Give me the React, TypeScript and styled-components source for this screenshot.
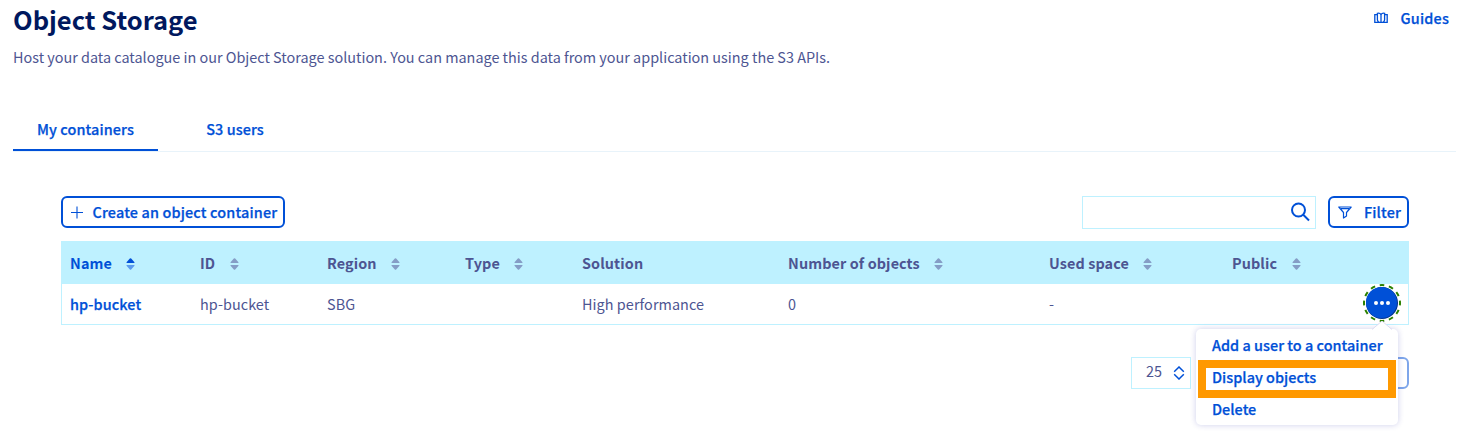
import React from 'react';
import styled, { createGlobalStyle } from 'styled-components';

const blue = '#0050d7';
const slate = '#4d5592';
const ice = '#bef1ff';

const GlobalStyle = createGlobalStyle`
  * { box-sizing: border-box; }
  body {
    margin: 0;
    background: #fff;
    color: ${slate};
    font-family: "Noto Sans CJK JP", "Noto Sans", sans-serif;
    font-size: 14.41px;
    line-height: 20px;
    overflow: hidden;
  }
  button { font: inherit; color: inherit; margin: 0; background: #fff; }
`;

const Page = styled.div`
  height: 444px;
  padding: 0 14px 0 13px;
  display: flex;
  flex-direction: column;
`;

const Header = styled.header`
  display: flex;
  justify-content: space-between;
  align-items: flex-start;
  height: 42px;
`;

const Title = styled.h1`
  margin: 2px 0 0;
  color: #00185e;
  font-size: 25.5px;
  line-height: 34px;
  font-weight: 700;
`;

const Label = styled.span<{ $spacing?: number }>`
  font-weight: 500;
  white-space: nowrap;
  letter-spacing: ${(p) => p.$spacing ?? 0.1}px;
  -webkit-text-stroke: 0.25px currentColor;
`;

const HeadLabel = styled.span`
  font-weight: 700;
  white-space: nowrap;
  letter-spacing: 0.1px;
`;

const GuidesLink = styled.a`
  display: flex;
  align-items: center;
  gap: 12px;
  margin: 8px 7px 0 0;
  color: ${blue};
`;

const Intro = styled.p`
  margin: 5px 0 0;
  height: 62px;
  white-space: nowrap;
`;

const Tabs = styled.nav`
  display: flex;
  gap: 24px;
  height: 43px;
  border-bottom: 1px solid #e8f3fa;
`;

const Tab = styled.a<{ $active?: boolean }>`
  display: flex;
  justify-content: center;
  width: ${(p) => (p.$active ? '145px' : '106px')};
  padding-top: 10px;
  color: ${blue};
  border-bottom: 2px solid ${(p) => (p.$active ? blue : 'transparent')};
`;

const Panel = styled.main`
  padding: 44px 47px 0 48px;
`;

const Toolbar = styled.div`
  display: flex;
  height: 33px;
  margin-bottom: 12px;
`;

const OutlineButton = styled.button<{ $width: number; $gap: number }>`
  display: flex;
  align-items: center;
  gap: ${(p) => p.$gap}px;
  width: ${(p) => p.$width}px;
  height: 32px;
  padding: 0 0 0 8px;
  border: 2px solid ${blue};
  border-radius: 6px;
  color: ${blue};
`;

const SearchBox = styled.div`
  display: flex;
  align-items: center;
  justify-content: flex-end;
  width: 234px;
  height: 33px;
  margin: 0 12px 0 auto;
  padding: 0 5px 1px 0;
  border: 1px solid ${ice};
`;

const Table = styled.div`
  border: 1px solid ${ice};
  height: 84px;
`;

const Row = styled.div<{ $head?: boolean }>`
  display: grid;
  grid-template-columns: 130px 127px 138px 117px 206px 261px 183px 1fr;
  align-items: center;
  height: ${(p) => (p.$head ? 42 : 40)}px;
  padding-left: 8px;
  background: ${(p) => (p.$head ? ice : '#fff')};
`;

const HeadCell = styled.div<{ $active?: boolean }>`
  display: flex;
  align-items: flex-start;
  gap: 14.5px;
  color: ${(p) => (p.$active ? blue : slate)};

  svg { margin-top: 5px; }
`;

const Cell = styled.div<{ $link?: boolean }>`
  padding-bottom: 2px;
  color: ${(p) => (p.$link ? blue : slate)};
  white-space: nowrap;
  letter-spacing: 0.06px;
`;

const ActionCell = styled.div`
  display: flex;
  justify-content: flex-end;
  padding: 0 7px 3px 0;
`;

const ActionAnchor = styled.div`
  position: relative;
  width: 38px;
  height: 38px;
`;

const Menu = styled.div`
  position: absolute;
  z-index: 2;
  top: 45px;
  right: 3px;
  width: 202px;
  height: 96px;
  border-radius: 5px;
  background: #fff;
  box-shadow: 0 0 6px rgba(0, 14, 156, 0.2);
`;

const MenuArrow = styled.svg`
  position: absolute;
  top: -8px;
  right: 5px;
`;

const MenuItem = styled.a`
  display: block;
  height: 32px;
  padding: 6px 0 0 16px;
  color: ${blue};
`;

const Highlight = styled.div`
  position: absolute;
  top: 31px;
  left: 2px;
  width: 198px;
  height: 38px;
  border: 8px solid #ff9900;
`;

const Pagination = styled.div`
  display: flex;
  justify-content: flex-end;
  margin-top: 32px;
`;

const PageSize = styled.div`
  display: flex;
  align-items: center;
  gap: 11px;
  width: 60px;
  height: 32px;
  padding-left: 14px;
  border: 1px solid ${ice};
`;

const PageSizeValue = styled.span`
  padding-bottom: 4px;
`;

const NextButton = styled.button`
  width: 40px;
  height: 32px;
  margin-left: 178px;
  border: 2px solid ${blue};
  border-radius: 6px;
  opacity: 0.5;
`;

const SortIcon = ({ active }: { active?: boolean }) => (
  <svg width="9" height="12" viewBox="0 0 9 12" fill={active ? blue : '#859dc6'}>
    <path d="M.5 4.2 3.8.6Q4.5 0 5.2.6L8.5 4.2Q8.7 5 8 5H1Q.3 5 .5 4.2Z" />
    <path
      d="M.5 7.8 3.8 11.4Q4.5 12 5.2 11.4L8.5 7.8Q8.7 7 8 7H1Q.3 7 .5 7.8Z"
      fill={active ? '#5c9bee' : '#859dc6'}
    />
  </svg>
);

const BookIcon = () => (
  <svg width="14" height="12" viewBox="0 0 14 12" fill="none" stroke={blue} strokeWidth="1.3">
    <path d="M3 2.600H.8v7.800h12.400V2.600H11" />
    <path d="M7 2.600C6.300 1.300 5 1 3.400 1.300v6.500c.2 1.200.8 2 1.600 2.600M7 2.600c.7-1.300 2-1.600 3.600-1.300v6.500c-.2 1.200-.8 2-1.600 2.600M7 2.600v7.800" />
  </svg>
);

const PlusIcon = () => (
  <svg width="12" height="13" viewBox="0 0 12 13" stroke={blue} strokeWidth="1.1">
    <path d="M6 .5v12M0 6.500h12" />
  </svg>
);

const SearchIcon = () => (
  <svg width="20" height="20" viewBox="0 0 20 20" fill="none" stroke={blue} strokeWidth="2">
    <circle cx="8.500" cy="8" r="6.500" />
    <path d="m13 12.500 6 6" />
  </svg>
);

const FilterIcon = () => (
  <svg width="14" height="13" viewBox="0 0 14 13" fill="none" stroke={blue} strokeWidth="1.200">
    <path
      d="M.8 1h12.400L8.500 6.500V10L5.500 12V6.500ZM3 2.600h8"
      strokeLinejoin="round"
    />
  </svg>
);

const StepperIcon = () => (
  <svg width="12" height="14" viewBox="0 0 12 14" fill="none" stroke={blue} strokeWidth="1.500">
    <path d="m1.200 5.700 4.800-4.700 4.800 4.700M1.200 8.300 6 13l4.800-4.700" />
  </svg>
);

const MoreIcon = () => (
  <svg width="38" height="38" viewBox="0 0 38 38">
    <circle
      cx="19"
      cy="19"
      r="18"
      fill="none"
      stroke="#2b8000"
      strokeWidth="2"
      pathLength="96"
      strokeDasharray="4 4"
      strokeDashoffset="2"
    />
    <circle cx="19" cy="19" r="16" fill="#00348f" />
    <circle cx="18.500" cy="18.500" r="15.500" fill={blue} />
    <g fill="#fff">
      <circle cx="13" cy="19" r="2" />
      <circle cx="19" cy="19" r="2" />
      <circle cx="25" cy="19" r="2" />
    </g>
  </svg>
);

const columns = [
  { name: 'Name', sortable: true, active: true },
  { name: 'ID', sortable: true },
  { name: 'Region', sortable: true },
  { name: 'Type', sortable: true },
  { name: 'Solution' },
  { name: 'Number of objects', sortable: true },
  { name: 'Used space', sortable: true },
  { name: 'Public', sortable: true },
];

const actions = ['Add a user to a container', 'Display objects', 'Delete'];

export default function App() {
  return (
    <>
      <GlobalStyle />
      <Page>
        <Header>
          <Title>Object Storage</Title>
          <GuidesLink>
            <BookIcon />
            <Label $spacing={0.2}>Guides</Label>
          </GuidesLink>
        </Header>
        <Intro>
          Host your data catalogue in our Object Storage solution. You can manage this data from your
          application using the S3 APIs.
        </Intro>
        <Tabs>
          <Tab $active>
            <Label>My containers</Label>
          </Tab>
          <Tab>
            <Label>S3 users</Label>
          </Tab>
        </Tabs>
        <Panel>
          <Toolbar>
            <OutlineButton $width={224} $gap={9.5}>
              <PlusIcon />
              <Label $spacing={0.16}>Create an object container</Label>
            </OutlineButton>
            <SearchBox>
              <SearchIcon />
            </SearchBox>
            <OutlineButton $width={81} $gap={12}>
              <FilterIcon />
              <Label $spacing={0.16}>Filter</Label>
            </OutlineButton>
          </Toolbar>
          <Table>
            <Row $head>
              {columns.map((c) => (
                <HeadCell key={c.name} $active={c.active}>
                  <HeadLabel>{c.name}</HeadLabel>
                  {c.sortable && <SortIcon active={c.active} />}
                </HeadCell>
              ))}
            </Row>
            <Row>
              <Cell $link>
                <Label>hp-bucket</Label>
              </Cell>
              <Cell>hp-bucket</Cell>
              <Cell>SBG</Cell>
              <Cell />
              <Cell>High performance</Cell>
              <Cell>0</Cell>
              <Cell>-</Cell>
              <ActionCell>
                <ActionAnchor>
                  <MoreIcon />
                  <Menu>
                    <MenuArrow width="22" height="10" viewBox="0 0 22 10">
                      <path d="M1 9 11 0l10 9v1H1z" fill="#fff" />
                      <path d="M1 8.500 11 0l10 8.500" fill="none" stroke="#dcdcf2" />
                    </MenuArrow>
                    {actions.map((action) => (
                      <MenuItem key={action}>
                        <Label $spacing={0.03}>{action}</Label>
                      </MenuItem>
                    ))}
                    <Highlight />
                  </Menu>
                </ActionAnchor>
              </ActionCell>
            </Row>
          </Table>
          <Pagination>
            <PageSize>
              <PageSizeValue>25</PageSizeValue>
              <StepperIcon />
            </PageSize>
            <NextButton />
          </Pagination>
        </Panel>
      </Page>
    </>
  );
}
